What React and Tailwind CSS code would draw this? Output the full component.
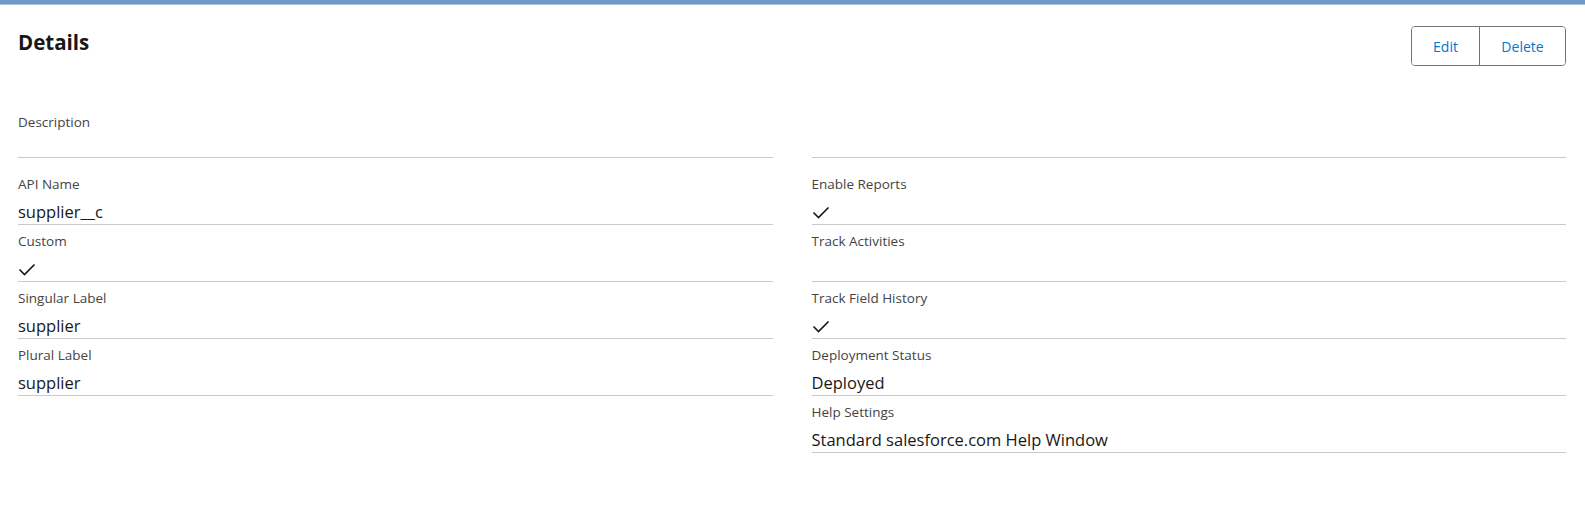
import React from 'react';

const leftRows = [
    { label: 'API Name', value: 'supplier__c' },
    { label: 'Custom', check: true },
    { label: 'Singular Label', value: 'supplier' },
    { label: 'Plural Label', value: 'supplier' },
];

const rightRows = [
    { label: 'Enable Reports', check: true },
    { label: 'Track Activities' },
    { label: 'Track Field History', check: true },
    { label: 'Deployment Status', value: 'Deployed' },
    { label: 'Help Settings', value: 'Standard salesforce.com Help Window' },
];

const CheckMark = () => (
    <svg width="18" height="13" viewBox="0 0 18 13" fill="none" className="block">
        <path d="M1.5 6.5 L6.5 11.5 L16.5 1.5" stroke="#181818" strokeWidth="1.6" />
    </svg>
);

const Field = ({ label, value, check }) => (
    <div className="pt-[7px] border-b border-[#c9c9c9]">
        <div className="text-[13.5px] leading-[18px] text-[#444444]">{label}</div>
        <div className="mt-[7px] h-[24px] text-[16.5px] leading-[24px] text-[#181818] flex items-center">
            {check ? <CheckMark /> : value}
        </div>
    </div>
);

const App = () => {
    return (
        <div className="w-full h-screen overflow-hidden bg-white" style={{ fontFamily: '"Open Sans", "Noto Sans", sans-serif' }}>
            {/* banner strip */}
            <div className="h-[5px] bg-[#7199c8] border-b border-[#a8bfdc]" />

            <div className="pl-[18px] pr-[19px]">
                {/* header */}
                <div className="flex items-start justify-between pt-[21px]">
                    <h2 className="mt-[2px] text-[20.5px] leading-[28px] font-bold text-[#181818]">Details</h2>
                    <div className="flex h-[40px] border border-[#747474] rounded-[4px] overflow-hidden">
                        <button className="w-[67px] text-[14px] text-[#0176d3] bg-white">Edit</button>
                        <button className="w-[86px] text-[14px] text-[#0176d3] bg-white border-l border-[#747474]">Delete</button>
                    </div>
                </div>

                {/* description row */}
                <div className="grid grid-cols-2 gap-x-[39px] mt-[47px]">
                    <div className="border-b border-[#c9c9c9] h-[45px]">
                        <div className="text-[13.5px] leading-[18px] text-[#444444]">Description</div>
                    </div>
                    <div className="border-b border-[#c9c9c9] h-[45px]" />
                </div>

                {/* field columns */}
                <div className="grid grid-cols-2 gap-x-[39px] mt-[10px] items-start">
                    <div>
                        {leftRows.map((r) => (
                            <Field key={r.label} {...r} />
                        ))}
                    </div>
                    <div>
                        {rightRows.map((r) => (
                            <Field key={r.label} {...r} />
                        ))}
                    </div>
                </div>
            </div>
        </div>
    );
};

export default App;
